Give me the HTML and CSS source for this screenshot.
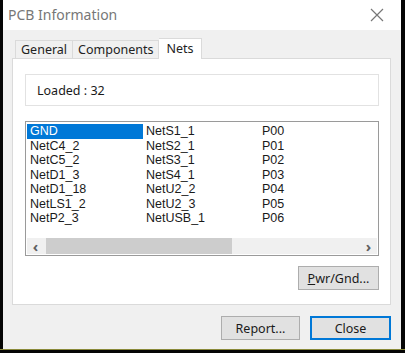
FILE: index.html
```html
<!DOCTYPE html>
<html lang="en">
  <head>
    <meta charset="UTF-8" />
    <title>PCB Information</title>
    <link rel="stylesheet" href="styles.css">
  </head>
  <body>
    <div class="dialog">
      <div class="titlebar">
        <span class="title">PCB Information</span>
        <svg class="close-x" width="14" height="14" viewBox="0 0 14 14">
          <path d="M1 1 L13 13 M13 1 L1 13" stroke="#777" stroke-width="1.2" fill="none" />
        </svg>
      </div>
      <div class="body">
        <div class="tabs">
          <div class="tab">General</div>
          <div class="tab">Components</div>
          <div class="tab active">Nets</div>
        </div>
        <div class="panel">
          <div class="loaded">Loaded : 32</div>
          <div class="listbox">
            <div class="columns">
              <div class="col">
                <div class="item selected">GND</div>
                <div class="item">NetC4_2</div>
                <div class="item">NetC5_2</div>
                <div class="item">NetD1_3</div>
                <div class="item">NetD1_18</div>
                <div class="item">NetLS1_2</div>
                <div class="item">NetP2_3</div>
              </div>
              <div class="col">
                <div class="item">NetS1_1</div>
                <div class="item">NetS2_1</div>
                <div class="item">NetS3_1</div>
                <div class="item">NetS4_1</div>
                <div class="item">NetU2_2</div>
                <div class="item">NetU2_3</div>
                <div class="item">NetUSB_1</div>
              </div>
              <div class="col">
                <div class="item">P00</div>
                <div class="item">P01</div>
                <div class="item">P02</div>
                <div class="item">P03</div>
                <div class="item">P04</div>
                <div class="item">P05</div>
                <div class="item">P06</div>
              </div>
            </div>
            <div class="hscroll">
              <span class="arrow">&#8249;</span>
              <div class="track"><div class="thumb"></div></div>
              <span class="arrow">&#8250;</span>
            </div>
          </div>
          <div class="panel-actions">
            <button class="btn"><u>P</u>wr/Gnd...</button>
          </div>
        </div>
        <div class="footer">
          <button class="btn wide">Report...</button>
          <button class="btn wide default">Close</button>
        </div>
      </div>
    </div>
    <div class="pcb-line"></div>
  </body>
</html>
```

FILE: styles.css
```css
* {
  margin: 0;
  padding: 0;
  box-sizing: border-box;
}

body {
  background: #050505;
  width: 405px;
  height: 353px;
  overflow: hidden;
  font-family: "Noto Sans", "Open Sans", sans-serif;
  font-size: 12px;
  color: #1a1a1a;
}

.dialog {
  margin-left: 3px;
  width: 398px;
  height: 349px;
  background: #f0f0f0;
  display: flex;
  flex-direction: column;
}

.titlebar {
  height: 30px;
  background: #fff;
  display: flex;
  align-items: center;
  justify-content: space-between;
  padding: 0 17px 0 5px;
}

.title {
  font-size: 14px;
  color: #777;
  margin-top: -2px;
}

.body {
  flex: 1;
  display: flex;
  flex-direction: column;
  padding: 8px 10px 0 9px;
}

.tabs {
  display: flex;
  align-items: flex-end;
  height: 20px;
  padding-left: 3px;
}

.tab {
  height: 18px;
  padding: 0 5px;
  background: #f0f0f0;
  border: 1px solid #dadada;
  border-bottom: none;
  line-height: 17px;
  font-size: 12.5px;
  color: #222;
}

.tab + .tab {
  border-left: none;
}

.tab.active {
  height: 21px;
  background: #fff;
  padding: 0 7px;
  margin-bottom: -1px;
  position: relative;
  z-index: 1;
  line-height: 20px;
}

.panel {
  height: 247px;
  background: #fff;
  border: 1px solid #dadada;
  padding: 15px 11px 0 12px;
  display: flex;
  flex-direction: column;
}

.loaded {
  height: 32px;
  border: 1px solid #e2e2e2;
  padding-left: 11px;
  line-height: 31px;
  font-size: 12.5px;
}

.listbox {
  margin-top: 15px;
  height: 135px;
  border: 1px solid #9a9a9a;
  display: flex;
  flex-direction: column;
  padding: 2px 1px 1px 1px;
}

.columns {
  flex: 1;
  display: flex;
}

.col {
  width: 116px;
}

.item {
  height: 14.5px;
  line-height: 14.5px;
  padding-left: 3px;
  font-family: "Liberation Sans", Arial, sans-serif;
  font-size: 12.5px;
  white-space: nowrap;
}

.item.selected {
  background: #0078d7;
  color: #fff;
}

.hscroll {
  height: 16px;
  display: flex;
  align-items: center;
  background: #f0f0f0;
}

.arrow {
  width: 17px;
  text-align: center;
  font-size: 15px;
  font-weight: bold;
  color: #606060;
  line-height: 16px;
}

.track {
  flex: 1;
  height: 16px;
  padding-left: 2px;
}

.thumb {
  width: 186px;
  height: 16px;
  background: #cdcdcd;
}

.panel-actions {
  display: flex;
  justify-content: flex-end;
  margin-top: 10px;
}

.btn {
  font-family: "Noto Sans", "Open Sans", sans-serif;
  font-size: 12.5px;
  color: #1a1a1a;
  background: #e1e1e1;
  border: 1px solid #adadad;
  height: 24px;
  width: 81px;
}

.footer {
  display: flex;
  justify-content: flex-end;
  gap: 10px;
  margin-top: 11px;
}

.btn.wide {
  width: 79px;
}

.btn.default {
  width: 81px;
  border: 2px solid #0078d7;
}

.pcb-line {
  height: 1px;
  background: #8a8a3a;
}
```
